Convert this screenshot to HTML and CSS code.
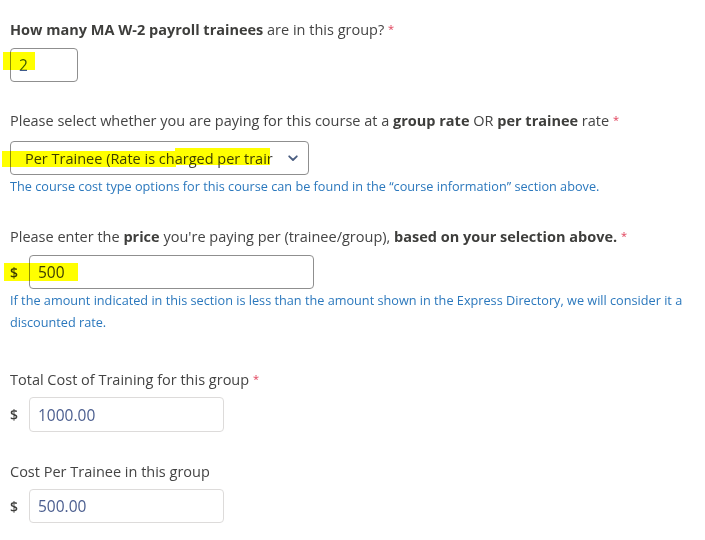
FILE: index.html
```html
<!DOCTYPE html>
<html>
<head>
<meta charset="utf-8">
<link rel="stylesheet" href="styles.css">
</head>
<body>
<form class="form">
  <div class="field f1">
    <div class="label"><b>How many MA W-2 payroll trainees</b> are in this group? <span class="req">*</span></div>
    <div class="box box-num">2</div>
  </div>

  <div class="field f2">
    <div class="label">Please select whether you are paying for this course at a <b>group rate</b> OR <b>per trainee</b> rate <span class="req">*</span></div>
    <div class="box box-select">
      <span class="sel-text">Per Trainee (Rate is charged per trair</span>
      <svg class="chev" width="10" height="7" viewBox="0 0 10 7"><path d="M1.2 1.3 L5 5 L8.8 1.3" fill="none" stroke="#4a5d80" stroke-width="1.8" stroke-linecap="round" stroke-linejoin="round"/></svg>
    </div>
    <div class="help">The course cost type options for this course can be found in the “course information” section above.</div>
  </div>

  <div class="field f3">
    <div class="label">Please enter the <b>price</b> you're paying per (trainee/group), <b>based on your selection above.</b> <span class="req">*</span></div>
    <div class="row">
      <span class="cur">$</span>
      <div class="box box-price">500</div>
    </div>
    <div class="help">If the amount indicated in this section is less than the amount shown in the Express Directory, we will consider it a discounted rate.</div>
  </div>

  <div class="field f4">
    <div class="label">Total Cost of Training for this group <span class="req">*</span></div>
    <div class="row">
      <span class="cur">$</span>
      <div class="box box-light">1000.00</div>
    </div>
  </div>

  <div class="field f5">
    <div class="label">Cost Per Trainee in this group</div>
    <div class="row">
      <span class="cur">$</span>
      <div class="box box-light">500.00</div>
    </div>
  </div>
</form>

<div class="hl hl1"></div>
<div class="hl hl2a"></div>
<div class="hl hl2b"></div>
<div class="hl hl3"></div>
</body>
</html>
```
FILE: styles.css
```css
html, body {
  margin: 0;
  padding: 0;
  background: #ffffff;
}
body {
  font-family: "Open Sans", "Liberation Sans", sans-serif;
  color: #444444;
  font-size: 14.5px;
  position: relative;
  width: 705px;
  height: 540px;
  overflow: hidden;
}
.form {
  padding: 18px 0 0 10px;
}
.label {
  line-height: 22px;
  height: 22px;
  white-space: nowrap;
  color: #444444;
}
.label b {
  font-weight: 700;
  color: #3e3e3c;
}
.req {
  color: #e0405a;
  font-size: 11px;
  vertical-align: 2px;
}
.box {
  box-sizing: border-box;
  border: 1px solid #8f8f8f;
  border-radius: 4px;
  height: 34px;
  display: flex;
  align-items: center;
  padding-left: 8px;
  color: #3f5b8c;
  font-size: 15.5px;
}
.f1 .box-num {
  width: 68px;
  margin-top: 8px;
}
.f2 {
  margin-top: 27px;
}
.f2 .box-select {
  width: 299px;
  margin-top: 10px;
  height: 34px;
  padding-left: 14px;
  padding-right: 10px;
  color: #3e3e3c;
  font-size: 14.5px;
  justify-content: space-between;
}
.sel-text {
  white-space: nowrap;
}
.chev {
  flex: none;
  margin-top: 1px;
}
.help {
  color: #2b78bd;
  font-size: 12.7px;
  line-height: 22px;
  padding-right: 16px;
}
.f3 {
  margin-top: 28px;
}
.row {
  display: flex;
  align-items: center;
  gap: 9px;
  margin-top: 8px;
}
.cur {
  width: 10px;
  color: #3e3e3c;
  font-weight: 600;
  font-size: 14px;
}
.box-price {
  width: 285px;
  color: #3e3e3c;
}
.f4 {
  margin-top: 35px;
}
.f4 .row {
  margin-top: 7px;
}
.box-light {
  width: 195px;
  height: 35px;
  border-color: #dddbda;
  color: #4b5e8f;
}
.f5 {
  margin-top: 29px;
}
.f5 .row {
  margin-top: 6px;
}
.f5 .box-light {
  height: 34px;
}
.hl {
  position: absolute;
  background: #ffff00;
  mix-blend-mode: multiply;
}
.hl1 { left: 3px; top: 52px; width: 32px; height: 18px; }
.hl2a { left: 2px; top: 151px; width: 174px; height: 16px; }
.hl2b { left: 175px; top: 148px; width: 95px; height: 17px; }
.hl3 { left: 4px; top: 263px; width: 74px; height: 18px; }
```
